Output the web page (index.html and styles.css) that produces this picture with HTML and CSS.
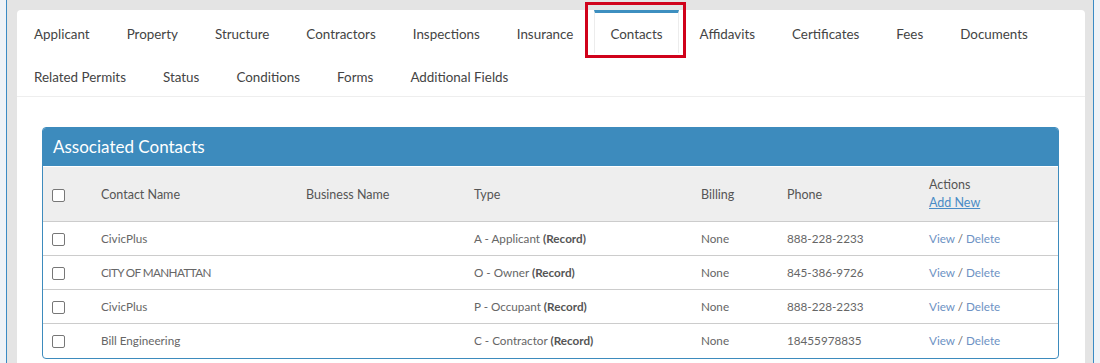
FILE: index.html
```html
<!DOCTYPE html>
<html>
<head>
<meta charset="utf-8">
<link rel="stylesheet" href="styles.css">
</head>
<body>
<div class="frame">
  <div class="card">
    <ul class="tabs">
      <li class="tab">Applicant</li>
      <li class="tab">Property</li>
      <li class="tab">Structure</li>
      <li class="tab">Contractors</li>
      <li class="tab">Inspections</li>
      <li class="tab">Insurance</li>
      <li class="tab active">Contacts<span class="highlight"></span></li>
      <li class="tab">Affidavits</li>
      <li class="tab">Certificates</li>
      <li class="tab">Fees</li>
      <li class="tab">Documents</li>
      <li class="tab">Related Permits</li>
      <li class="tab">Status</li>
      <li class="tab">Conditions</li>
      <li class="tab">Forms</li>
      <li class="tab">Additional Fields</li>
    </ul>
    <div class="content">
      <div class="panel">
        <div class="panel-heading">Associated Contacts</div>
        <table class="grid">
          <colgroup>
            <col class="c-check"><col class="c-name"><col class="c-biz"><col class="c-type"><col class="c-bill"><col class="c-phone"><col class="c-act">
          </colgroup>
          <thead>
            <tr>
              <th><span class="cb"></span></th>
              <th>Contact Name</th>
              <th>Business Name</th>
              <th>Type</th>
              <th>Billing</th>
              <th>Phone</th>
              <th class="actions-h"><div>Actions</div><a class="add">Add New</a></th>
            </tr>
          </thead>
          <tbody>
            <tr>
              <td><span class="cb"></span></td>
              <td>CivicPlus</td><td></td>
              <td>A - Applicant <b>(Record)</b></td>
              <td>None</td><td>888-228-2233</td>
              <td><a class="lnk">View</a> / <a class="lnk">Delete</a></td>
            </tr>
            <tr>
              <td><span class="cb"></span></td>
              <td class="caps">CITY OF MANHATTAN</td><td></td>
              <td>O - Owner <b>(Record)</b></td>
              <td>None</td><td>845-386-9726</td>
              <td><a class="lnk">View</a> / <a class="lnk">Delete</a></td>
            </tr>
            <tr>
              <td><span class="cb"></span></td>
              <td>CivicPlus</td><td></td>
              <td>P - Occupant <b>(Record)</b></td>
              <td>None</td><td>888-228-2233</td>
              <td><a class="lnk">View</a> / <a class="lnk">Delete</a></td>
            </tr>
            <tr>
              <td><span class="cb"></span></td>
              <td>Bill Engineering</td><td></td>
              <td>C - Contractor <b>(Record)</b></td>
              <td>None</td><td>18455978835</td>
              <td><a class="lnk">View</a> / <a class="lnk">Delete</a></td>
            </tr>
          </tbody>
        </table>
      </div>
    </div>
  </div>
</div>
</body>
</html>
```

FILE: styles.css
```css
html, body {
  margin: 0;
  padding: 0;
  height: 100%;
}
body {
  background: #eef2f7;
  font-family: Lato, "Noto Sans", sans-serif;
  color: #555;
  overflow: hidden;
}
.frame {
  margin-left: 6px;
  width: 1088px;
  min-height: 400px;
  background: #e4e4e4;
  border-left: 1px solid #3a8ac4;
  border-right: 1px solid #3a8ac4;
  padding: 10px 0 0 10px;
  box-sizing: border-box;
}
.card {
  width: 1068px;
  background: #fff;
  border-radius: 4px;
  min-height: 380px;
}
.tabs {
  list-style: none;
  margin: 0;
  padding: 0 0 0 1px;
  display: flex;
  flex-wrap: wrap;
  border-bottom: 1px solid #eee;
  height: 86px;
}
.tab {
  position: relative;
  height: 43px;
  box-sizing: border-box;
  border-top: 3px solid transparent;
  border-left: 1px solid transparent;
  border-right: 1px solid transparent;
  padding: 1px 15px 0;
  margin-right: 5px;
  line-height: 40px;
  font-size: 13.4px;
  color: #444;
  white-space: nowrap;
}
.tab.active {
  border-top-color: #3d8fc0;
  border-left-color: #ececec;
  border-right-color: #ececec;
}
.highlight {
  position: absolute;
  left: -10px;
  right: -8px;
  top: -11px;
  bottom: -5px;
  border: 3px solid #d0021b;
}
.content {
  padding: 30px 26px 20px 25px;
}
.panel {
  border: 1px solid #3d8bbd;
  border-radius: 4px;
  overflow: hidden;
}
.panel-heading {
  background: #3d8bbd;
  color: #fff;
  font-size: 17px;
  height: 38px;
  line-height: 38px;
  padding-left: 10px;
}
.grid {
  width: 100%;
  border-collapse: collapse;
  table-layout: fixed;
  font-size: 11.7px;
}
.c-check { width: 50px; }
.c-name { width: 205px; }
.c-biz { width: 168px; }
.c-type { width: 227px; }
.c-bill { width: 86px; }
.c-phone { width: 142px; }
.grid thead tr {
  background: #eee;
  height: 55px;
  border-top: 1px solid #fff;
  border-bottom: 1px solid #ccc;
}
.grid th {
  font-weight: normal;
  font-size: 12.5px;
  text-align: left;
  color: #555;
  padding: 0 8px;
  vertical-align: middle;
}
.grid th:first-child, .grid td:first-child {
  padding-left: 9px;
}
.actions-h div {
  line-height: 18px;
}
.add {
  color: #4a8cc6;
  text-decoration: underline;
  line-height: 18px;
}
.grid tbody tr {
  height: 34px;
  border-top: 1px solid #ccc;
}
.grid tbody tr:first-child {
  border-top: none;
}
.grid td {
  padding: 0 8px 1px;
  color: #666;
  vertical-align: middle;
  white-space: nowrap;
}
.grid td.caps {
  letter-spacing: -0.6px;
}
.grid td b {
  color: #555;
}
.lnk {
  color: #6d92c4;
}
.cb {
  display: inline-block;
  width: 11px;
  height: 11px;
  border: 1px solid #777;
  border-radius: 2px;
  background: #fff;
  vertical-align: middle;
}
```
